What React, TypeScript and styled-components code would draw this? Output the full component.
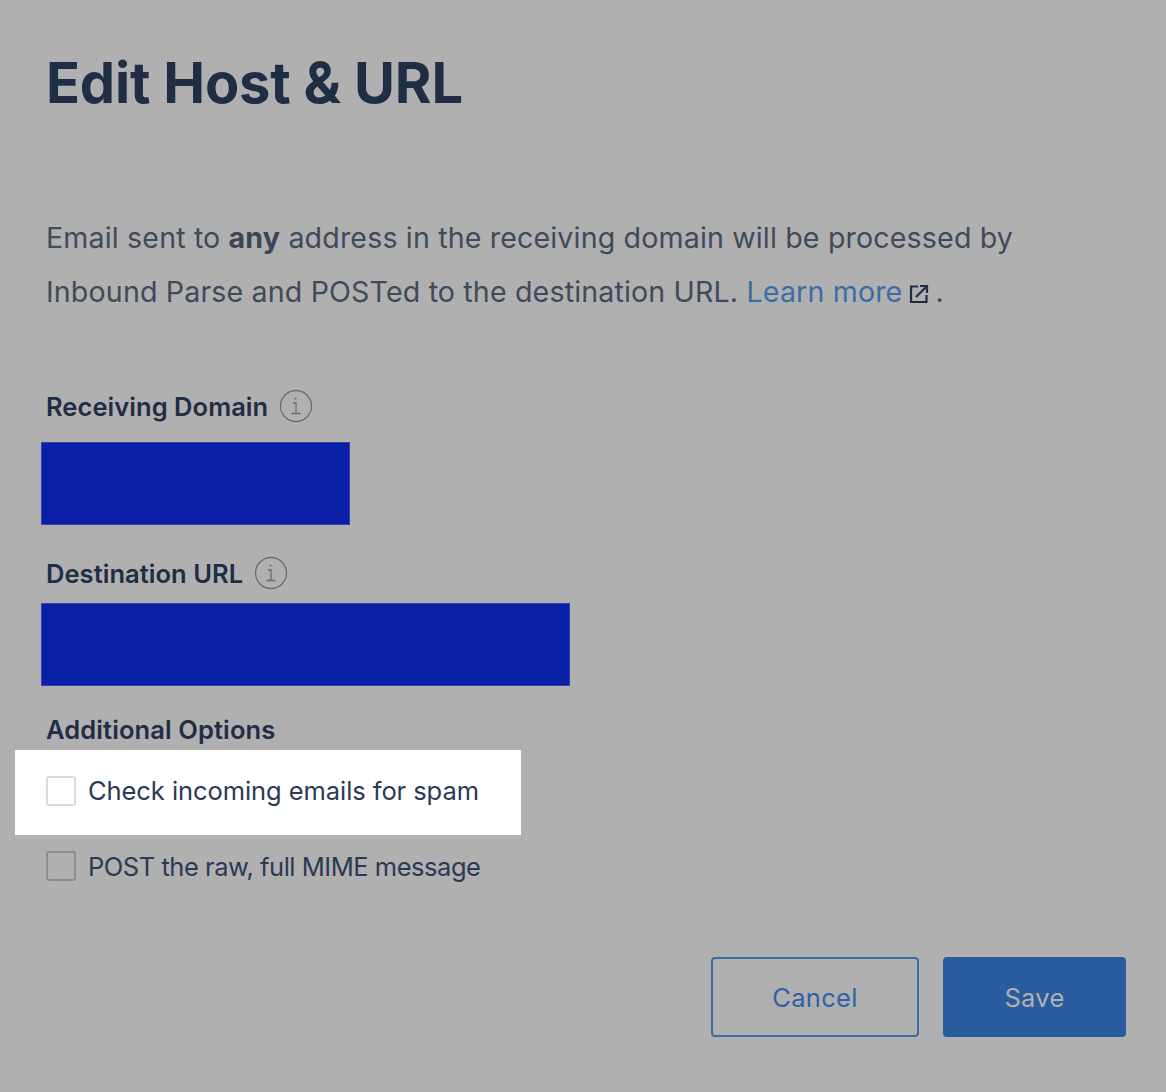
import React from "react";
import styled, { createGlobalStyle } from "styled-components";

const GlobalStyle = createGlobalStyle`
  html, body {
    margin: 0;
    padding: 0;
    background: #b0b0b0;
  }
  body {
    font-family: "Inter", "Liberation Sans", sans-serif;
  }
`;

const Page = styled.div`
  box-sizing: border-box;
  width: 1166px;
  height: 1092px;
  padding: 48px 40px 0 46px;
  background: #b0b0b0;
  overflow: hidden;
`;

const Title = styled.h1`
  margin: 0;
  font-size: 56px;
  line-height: 70px;
  font-weight: 700;
  letter-spacing: -0.2px;
  color: #1f2e44;
`;

const Intro = styled.p`
  margin: 93px 0 0;
  font-size: 28.6px;
  line-height: 54px;
  letter-spacing: 0.15px;
  color: #3f4a5a;
  & b {
    font-weight: 700;
    color: #3a4658;
  }
`;

const LearnMore = styled.a`
  color: #3c6ca5;
  text-decoration: none;
`;

const External = styled.svg`
  width: 20px;
  height: 20px;
  margin-left: 7px;
  margin-right: 6px;
  vertical-align: -2px;
`;

const FieldLabel = styled.div<{ $top: number }>`
  display: flex;
  align-items: center;
  gap: 11px;
  height: 34px;
  margin-top: ${(p) => p.$top}px;
  font-size: 25.5px;
  font-weight: 600;
  letter-spacing: 0.05px;
  color: #1f2e44;
`;

const Redacted = styled.div<{ $width: number; $gap: number }>`
  width: ${(p) => p.$width}px;
  height: 83px;
  margin: ${(p) => p.$gap}px 0 0 -5px;
  background: #0a1fa8;
  border: 1px solid #3344b0;
  box-sizing: border-box;
`;

const Heading = styled.div`
  height: 34px;
  margin-top: 26px;
  display: flex;
  align-items: center;
  font-size: 25.5px;
  font-weight: 600;
  letter-spacing: 0.1px;
  color: #1f2e44;
`;

const OptionHighlight = styled.div`
  box-sizing: border-box;
  width: 506px;
  height: 85px;
  margin: 4px 0 0 -31px;
  padding: 0 0 4px 31px;
  display: flex;
  align-items: center;
  background: #ffffff;
`;

const OptionPlain = styled.div`
  height: 32px;
  margin-top: 15px;
  display: flex;
  align-items: center;
`;

const Box = styled.span<{ $light?: boolean }>`
  box-sizing: border-box;
  flex: none;
  width: 30px;
  height: 30px;
  border-radius: 3px;
  border: 2px solid ${(p) => (p.$light ? "#d5dbe2" : "#8b8f94")};
  background: ${(p) => (p.$light ? "#ffffff" : "transparent")};
`;

const OptionText = styled.span<{ $tight?: boolean }>`
  margin-left: 12px;
  font-size: 25.5px;
  letter-spacing: ${(p) => (p.$tight ? "-0.47px" : "-0.07px")};
  color: #2a3a55;
`;

const Actions = styled.div`
  display: flex;
  justify-content: flex-end;
  gap: 24px;
  margin-top: 75px;
`;

const Button = styled.button<{ $primary?: boolean }>`
  box-sizing: border-box;
  height: 80px;
  width: ${(p) => (p.$primary ? 183 : 208)}px;
  border-radius: 4px;
  border: 2px solid ${(p) => (p.$primary ? "#295c9e" : "#3c6ca5")};
  background: ${(p) => (p.$primary ? "#295c9e" : "transparent")};
  color: ${(p) => (p.$primary ? "#b0b0b0" : "#2f62a3")};
  font-family: inherit;
  font-size: 25.5px;
  letter-spacing: 0.3px;
`;

const InfoIcon = () => (
  <svg width="34" height="34" viewBox="0 0 34 34" fill="none" stroke="#666d78" strokeWidth="1.3">
    <circle cx="17" cy="17" r="15.5" />
    <circle cx="16.5" cy="9.5" r="1" fill="#666d78" stroke="none" />
    <path d="M14 14h3v10M12.5 24.5h9" />
  </svg>
);

export default function App() {
  return (
    <Page>
      <GlobalStyle />
      <Title>Edit Host &amp; URL</Title>
      <Intro>
        Email sent to <b>any</b> address in the receiving domain will be processed by
        <br />
        Inbound Parse and POSTed to the destination URL. <LearnMore href="#">Learn more</LearnMore>
        <External viewBox="0 0 20 20" fill="none" stroke="#1f2e44" strokeWidth="2.2">
          <path d="M9 2.500H2v15.500h15.500V11" />
          <path d="M7 13L17.500 2.500M11 2h7v7" />
        </External>
        .
      </Intro>
      <FieldLabel $top={70}>
        Receiving Domain
        <InfoIcon />
      </FieldLabel>
      <Redacted $width={309} $gap={19} />
      <FieldLabel $top={31}>
        Destination URL
        <InfoIcon />
      </FieldLabel>
      <Redacted $width={529} $gap={13} />
      <Heading>Additional Options</Heading>
      <OptionHighlight>
        <Box $light />
        <OptionText>Check incoming emails for spam</OptionText>
      </OptionHighlight>
      <OptionPlain>
        <Box />
        <OptionText $tight>POST the raw, full MIME message</OptionText>
      </OptionPlain>
      <Actions>
        <Button>Cancel</Button>
        <Button $primary>Save</Button>
      </Actions>
    </Page>
  );
}
